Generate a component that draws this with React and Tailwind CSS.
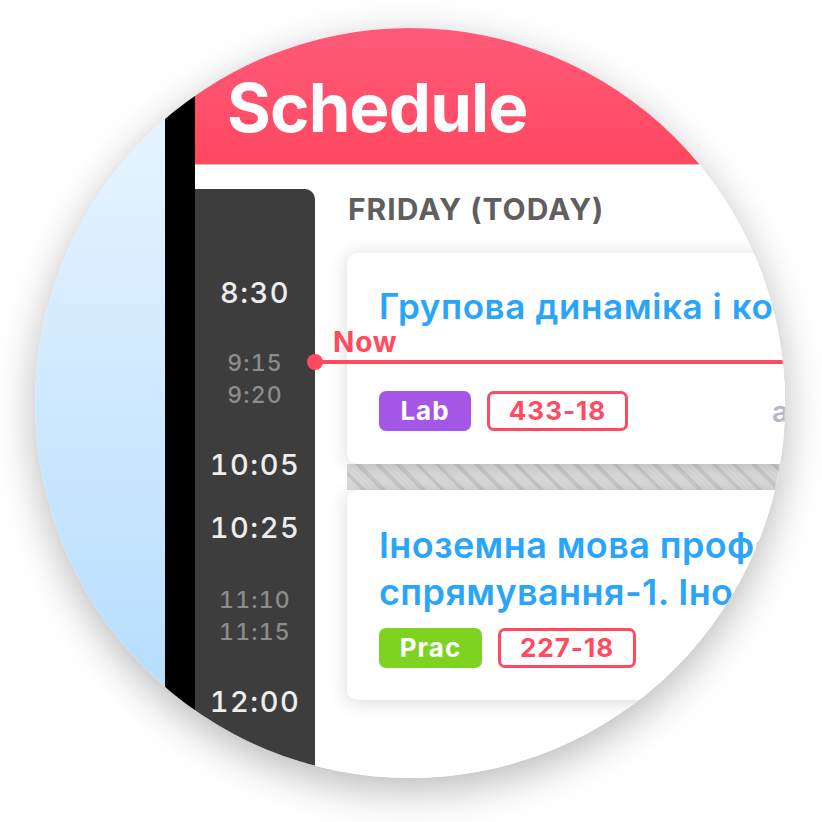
import React from "react";

const font = { fontFamily: "Inter, 'Noto Sans', 'Liberation Sans', sans-serif" };

function Tag({ children, className }) {
  return (
    <div
      className={
        "h-[40px] flex items-center justify-center rounded-[7px] text-[26px] font-bold leading-none tracking-[1px] " +
        className
      }
    >
      {children}
    </div>
  );
}

const big = "h-[32px] leading-[32px] text-[29px] font-medium text-[#ededed] tracking-[1.5px]";
const small = "h-[32px] leading-[32px] text-[23px] font-medium text-[#8c8c8c] tracking-[1.2px]";

export default function App() {
  return (
    <div className="w-[822px] h-[822px] bg-white pl-[35px] pt-[28px]" style={font}>
      <div className="w-[750px] h-[750px] rounded-full overflow-hidden flex shadow-[0_12px_40px_rgba(0,0,0,0.28)]">
        <div className="w-[130px] shrink-0 bg-gradient-to-b from-[#eef7ff] to-[#afdafd]" />
        <div className="w-[30px] shrink-0 bg-black" />
        <div className="flex-1 flex flex-col bg-white min-w-0">
          <div className="h-[137px] shrink-0 bg-gradient-to-b from-[#ff5a7a] to-[#ff4760] border-b border-[#c9c9c9] flex items-end pl-[32px] pb-[23px]">
            <div className="text-white text-[67px] font-bold leading-none tracking-[-0.8px]">Schedule</div>
          </div>
          <div className="relative flex-1 flex min-h-0">
            <div className="w-[120px] shrink-0 mt-[24px] bg-[#3d3d3d] rounded-tr-[10px] flex flex-col items-center pt-[88px] tabular-nums">
              <div className={big}>8:30</div>
              <div className={"mt-[38px] " + small}>9:15</div>
              <div className={small}>9:20</div>
              <div className={"mt-[38px] " + big}>10:05</div>
              <div className={"mt-[31px] " + big}>10:25</div>
              <div className={"mt-[40px] " + small}>11:10</div>
              <div className={small}>11:15</div>
              <div className={"mt-[38px] " + big}>12:00</div>
              <div className={"mt-[40px] " + big}>12:45</div>
            </div>
            <div className="flex-1 min-w-0 flex flex-col pl-[32px]">
              <div className="mt-[24px] h-[40px] leading-[40px] pl-[1px] text-[30px] font-bold text-[#5f5f5f] tracking-[1px] whitespace-nowrap">
                FRIDAY (TODAY)
              </div>
              <div className="mt-[24px] w-[620px] flex flex-col">
                <div className="relative z-10 h-[211px] bg-white rounded-[10px] shadow-[0_2px_18px_rgba(0,0,0,0.16)] flex flex-col pt-[30px] pb-[31px] pl-[32px]">
                  <div className="text-[35px] font-semibold leading-[46px] tracking-[0.6px] text-[#2ba5fa] whitespace-nowrap">
                    Групова динаміка і комунікації
                  </div>
                  <div className="mt-auto flex items-center">
                    <Tag className="bg-[#a456e6] text-white w-[92px]">Lab</Tag>
                    <Tag className="ml-[16px] border-[3px] border-[#ff4a60] text-[#ff4a60] w-[141px]">433-18</Tag>
                    <div className="ml-[144px] text-[29px] font-semibold text-[#b0b8c6] whitespace-nowrap">асистент</div>
                  </div>
                </div>
                <div className="h-[26px] bg-[repeating-linear-gradient(45deg,#dadada_0px,#dadada_10px,#c8c8c8_10px,#c8c8c8_14px)]" />
                <div className="relative z-10 h-[210px] bg-white rounded-[10px] shadow-[0_2px_18px_rgba(0,0,0,0.16)] flex flex-col pt-[32px] pb-[32px] pl-[32px]">
                  <div className="text-[36px] font-semibold leading-[47px] tracking-[0.4px] text-[#2ba5fa] whitespace-nowrap">
                    <div>Іноземна мова професійного</div>
                    <div>спрямування-1. Іноземна мова</div>
                  </div>
                  <div className="mt-auto flex items-center">
                    <Tag className="bg-[#7ed321] text-white w-[103px]">Prac</Tag>
                    <Tag className="ml-[16px] border-[3px] border-[#ff4a60] text-[#ff4a60] w-[138px]">227-18</Tag>
                  </div>
                </div>
              </div>
            </div>
            <div className="absolute z-20 left-[120px] right-0 top-[195px] h-[4px] bg-[#ff4a60]" />
            <div className="absolute z-20 left-[112px] top-[189px] w-[16px] h-[16px] rounded-full bg-[#ff4a60]" />
            <div className="absolute z-20 left-[138px] top-[163px] text-[28px] font-bold leading-none tracking-[0.8px] text-[#ff4a60]">Now</div>
          </div>
        </div>
      </div>
    </div>
  );
}
